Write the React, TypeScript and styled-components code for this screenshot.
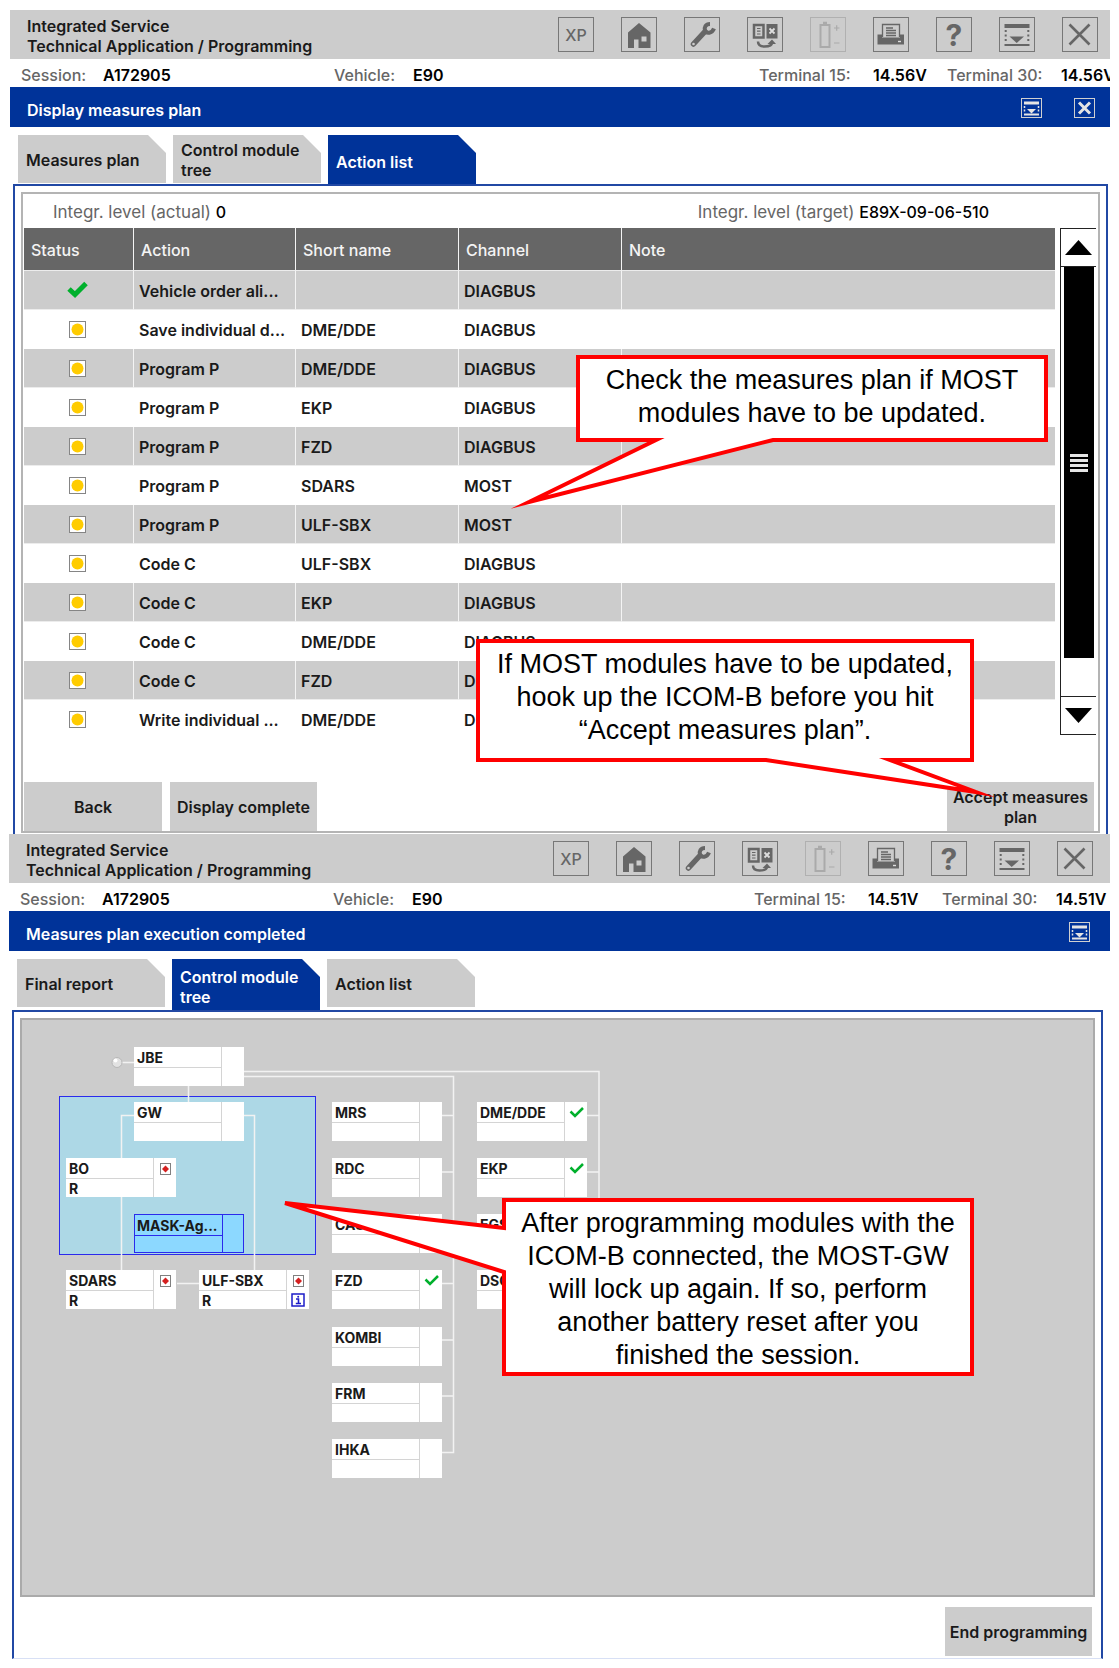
import React from "react";
import styled, { createGlobalStyle, css } from "styled-components";

const blue = "#003399";
const grey = "#cccccc";
const ink = "#666666";

const GlobalStyle = createGlobalStyle`
  *, *::before, *::after { box-sizing: border-box; }
  body {
    margin: 0;
    background: #fff;
    color: #1a1a1a;
    font: 600 16px/20px Inter, "Liberation Sans", sans-serif;
  }
  button { font: inherit; color: inherit; border: 0; padding: 0; cursor: pointer; }
`;

const Page = styled.main`
  padding: 10px 9px 0 9px;
`;

const Screen = styled.section<{ $indent?: number }>`
  position: relative;
  margin-left: ${(p) => p.$indent ?? 0}px;
`;

/* ---------- header ---------- */

const Header = styled.header<{ $end: number }>`
  display: flex;
  justify-content: space-between;
  align-items: center;
  height: 49px;
  padding: 0 ${(p) => p.$end}px 0 17px;
  background: ${grey};
`;

const AppName = styled.h1`
  margin: 0;
  padding-top: 2px;
  font: inherit;
`;

const Toolbar = styled.div`
  display: flex;
  gap: 27px;
`;

const ToolButton = styled.button<{ $off?: boolean }>`
  display: grid;
  place-items: center;
  width: 36px;
  height: 35px;
  background: transparent;
  color: ${(p) => (p.$off ? "#aaaaaa" : ink)};
  border: 1px solid ${(p) => (p.$off ? "#b0b0b0" : "#777777")};
  svg { display: block; width: 34px; height: 33px; }
`;

const XpLabel = styled.span`
  font-size: 16px;
  font-weight: 500;
`;

const HelpMark = styled.span`
  font-size: 30px;
  font-weight: 700;
`;

const InfoBar = styled.dl<{ $start: number }>`
  display: flex;
  align-items: center;
  height: 28px;
  margin: 0;
  padding: 3px 0 0 ${(p) => p.$start}px;
  overflow: hidden;
  white-space: nowrap;
`;

const Readout = styled.div<{ $label: number; $width: number; $push?: boolean }>`
  display: grid;
  grid-template-columns: ${(p) => p.$label}px 1fr;
  flex: 0 0 ${(p) => p.$width}px;
  min-width: 0;
  margin-left: ${(p) => (p.$push ? "auto" : "0")};
  dt { color: ${ink}; font-weight: 500; }
  dd { margin: 0; color: #000; }
`;

/* ---------- title bar ---------- */

const TitleBar = styled.div<{ $end: number }>`
  display: flex;
  align-items: center;
  justify-content: space-between;
  height: 40px;
  padding: 0 ${(p) => p.$end}px 0 17px;
  background: ${blue};
  color: #fff;
`;

const Title = styled.h2`
  margin: 0;
  padding-top: 6px;
  font: inherit;
`;

const TitleTools = styled.div`
  display: flex;
  gap: 32px;
  padding-top: 2px;
`;

const SmallButton = styled.button`
  width: 21px;
  height: 20px;
  background: transparent;
  color: #e4e4e4;
  border: 1px solid #d0d0d0;
  svg { display: block; width: 19px; height: 18px; }
`;

/* ---------- tabs ---------- */

const TabRow = styled.div`
  display: flex;
  align-items: flex-start;
  gap: 7px;
  padding: 8px 8px 0;
`;

const Tab = styled.button<{ $active?: boolean; $gap: number }>`
  width: 148px;
  height: ${(p) => (p.$active ? 48 + p.$gap : 48)}px;
  padding: ${(p) => (p.$active ? "5px" : "1px")} 16px 0 8px;
  text-align: left;
  background: ${(p) => (p.$active ? blue : grey)};
  color: ${(p) => (p.$active ? "#fff" : "#1a1a1a")};
  clip-path: polygon(0 0, calc(100% - 18px) 0, 100% 18px, 100% 100%, 0 100%);
`;

const Frame = styled.div<{ $right: number; $closed?: boolean }>`
  margin: 0 ${(p) => p.$right}px 0 3px;
  padding: 6px 6px ${(p) => (p.$closed ? 2 : 1)}px;
  border: solid #2148a4;
  border-width: 2px 2px 0;
  ${(p) => p.$closed && css`border-bottom: 1px solid #d8e0f5;`}
`;

const Sheet = styled.div`
  border: 2px solid #b4b4b4;
`;

/* ---------- action list ---------- */

const Levels = styled.div`
  display: flex;
  justify-content: space-between;
  align-items: center;
  height: 34px;
  padding: 2px 109px 0 30px;
  font-size: 17px;
  color: ${ink};
  font-weight: 400;
  b { color: #000; font-size: 16px; font-weight: 500; }
`;

const ListArea = styled.div`
  display: flex;
  align-items: flex-start;
  gap: 5px;
  min-height: 554px;
  padding: 0 2px 0 1px;
`;

const Table = styled.table`
  flex: 1;
  min-width: 0;
  border-collapse: separate;
  border-spacing: 0;
  table-layout: fixed;
  th, td {
    padding: 2px 2px 0 5px;
    text-align: left;
    white-space: nowrap;
    overflow: hidden;
    text-overflow: ellipsis;
    border-right: 1px solid #f4f4f4;
    border-bottom: 1px solid #ececec;
  }
  th:last-child, td:last-child { border-right: 0; }
  th {
    height: 43px;
    padding-left: 7px;
    background: ${ink};
    color: #f4f4f4;
    font-weight: 500;
  }
  td { height: 39px; }
  tbody tr:nth-child(odd) { background: ${grey}; }
  tbody tr:nth-child(even) td { border-color: #fff; }
  td:first-child { padding: 0 5px; text-overflow: clip; }
`;

const StatusBox = styled.div`
  display: grid;
  justify-content: center;
  padding-right: 2px;
  svg { display: block; }
`;

const ScrollBar = styled.div`
  display: flex;
  flex-direction: column;
  flex: 0 0 36px;
  height: 507px;
  border: 1px solid #222;
  border-right: 0;
`;

const ArrowButton = styled.button`
  display: grid;
  place-items: center;
  height: 37px;
  background: #fff;
`;

const Track = styled.div`
  flex: 1;
  padding: 0 2px 0 3px;
  border: solid #222;
  border-width: 1px 0;
`;

const Thumb = styled.div`
  display: flex;
  flex-direction: column;
  align-items: center;
  justify-content: center;
  gap: 2px;
  height: 391px;
  background: #000;
  i { width: 18px; height: 3px; background: #e6e6e6; }
`;

const ButtonBar = styled.div<{ $top?: number; $end: number }>`
  display: flex;
  gap: 8px;
  margin-top: ${(p) => p.$top ?? 0}px;
  padding: 0 ${(p) => p.$end}px 0 1px;
`;

const PlateButton = styled.button<{ $width: number; $push?: boolean }>`
  width: ${(p) => p.$width}px;
  height: 49px;
  margin-left: ${(p) => (p.$push ? "auto" : "0")};
  background: ${grey};
`;

/* ---------- module tree ---------- */

const Canvas = styled(Sheet)`
  position: relative;
  height: 579px;
  background: ${grey};
  border-color: #aaaaaa;
`;

const Wires = styled.svg`
  position: absolute;
  left: 0;
  top: 0;
  width: 620px;
  height: 480px;
`;

const MostZone = styled.div`
  position: absolute;
  left: 37px;
  top: 76px;
  width: 257px;
  height: 159px;
  background: #add8e6;
  border: 1px solid #2a2aec;
`;

const Node = styled.div<{ $x: number; $y: number; $masked?: boolean }>`
  position: absolute;
  left: ${(p) => p.$x}px;
  top: ${(p) => p.$y}px;
  display: grid;
  grid-template: 20px minmax(0, 1fr) / 87px 1fr;
  gap: 1px;
  width: 110px;
  height: 39px;
  font-size: 14px;
  font-weight: 700;
  color: #1a1a1a;
  background: #d4d4d4;
  > * { background: #fff; padding-left: 3px; line-height: 22px; white-space: nowrap; }
  ${(p) =>
    p.$masked &&
    css`
      background: #2a2aec;
      border: 1px solid #2a2aec;
      > * { background: #8cd8ff; padding-left: 2px; }
    `}
`;

const NodeVariant = styled.div`
  && { line-height: 19px; }
`;

const NodeFlags = styled.div`
  grid-column: 2;
  grid-row: 1 / 3;
  display: grid;
  grid-template-rows: 21px 17px;
  place-items: center;
  padding-right: 3px;
`;

/* ---------- callouts ---------- */

const Callout = styled.aside<{ $w: number; $h: number; $top: number; $left?: number; $right?: number }>`
  position: absolute;
  z-index: 2;
  top: ${(p) => p.$top}px;
  ${(p) => (p.$left !== undefined ? `left: ${p.$left}px;` : `right: ${p.$right}px;`)}
  width: ${(p) => p.$w}px;
  height: ${(p) => p.$h}px;
  pointer-events: none;
`;

const CalloutShape = styled.svg`
  position: absolute;
  inset: 0;
  width: 100%;
  height: 100%;
  overflow: visible;
  path { fill: #fff; stroke: #ff0000; stroke-width: 4; stroke-miterlimit: 10; }
`;

const CalloutText = styled.p`
  position: relative;
  margin: 0;
  padding-top: 9px;
  text-align: center;
  white-space: nowrap;
  color: #000;
  font: 400 27px/33px "Liberation Sans", Arial, sans-serif;
`;

/* ---------- icons ---------- */

const HomeIcon = () => (
  <svg viewBox="1 1 34 33" fill="currentColor">
    <path fillRule="evenodd" d="M18 6 29.5 15.500V31H17.500V22.500H13V31H7V15.500ZM20.500 19.500V24.500H25.500V19.500Z" />
  </svg>
);
const WrenchIcon = () => (
  <svg viewBox="1 1 34 33" fill="none" stroke="currentColor">
    <path d="M9.500 27 21 14.500" strokeWidth="5.500" strokeLinecap="round" />
    <path d="M26 7C21.500 7 20 10.500 21 13.500 22.500 17 28 16.500 30 11.500" strokeWidth="4" />
    <circle cx="9.500" cy="27" r="1.300" fill="#ccc" stroke="none" />
  </svg>
);
const SwapIcon = () => (
  <svg viewBox="1 1 34 33" fill="none" stroke="currentColor">
    <rect x="7" y="8" width="9.500" height="12.500" strokeWidth="2.500" />
    <path d="M10 11.500H13.500M10 14.200H13.500M10 17H13.500" strokeWidth="1.200" />
    <rect x="19.500" y="7" width="11" height="14.500" fill="currentColor" stroke="none" />
    <path d="M22.500 11.500 27.500 16.500M27.500 11.500 22.500 16.500" stroke="#ddd" strokeWidth="1.800" />
    <path d="M11 24.500C11 28.500 13.500 29.500 17.500 29.500 22.500 29.500 25 28.500 25 25.500" strokeWidth="2.500" />
    <path d="M25 22.500 29 27H20.500Z" fill="currentColor" stroke="none" />
  </svg>
);
const BatteryIcon = () => (
  <svg viewBox="1 1 34 33" fill="none" stroke="currentColor">
    <rect x="10.500" y="8" width="9" height="22" strokeWidth="2" />
    <path d="M13 6H17" strokeWidth="2.500" />
    <path d="M24 11H29.500M26.700 8.200V13.800M24 26H29.500" strokeWidth="1.200" />
  </svg>
);
const PrinterIcon = () => (
  <svg viewBox="1 1 34 33" fill="none" stroke="currentColor">
    <path d="M4.500 17.500H9V20.500H27V17.500H31V27.500H4.500Z" fill="currentColor" stroke="none" />
    <path d="M9.500 20V7.500H26.500V20" strokeWidth="1.300" />
    <path d="M13 11H20M13 13.500H23M13 16H23M13 18.500H23" strokeWidth="1.300" />
    <path d="M25 24.500H28" stroke="#ddd" strokeWidth="1.400" />
  </svg>
);
const DropPanelIcon = () => (
  <svg viewBox="1 1 34 33" fill="none" stroke="currentColor">
    <path d="M5.500 9H30.500" strokeWidth="4" />
    <path d="M6.700 13V25M29.300 13V25" strokeWidth="2" strokeDasharray="2 2.500" />
    <path d="M10.500 19.500H25L17.700 26Z" fill="currentColor" stroke="none" />
    <path d="M5.500 28H30.500" strokeWidth="2" />
  </svg>
);
const CrossIcon = () => (
  <svg viewBox="1 1 34 33" fill="none" stroke="currentColor" strokeWidth="2.600">
    <path d="M7.500 7.500 27.500 27.500M27.500 7.500 7.500 27.500" />
  </svg>
);
const SmallDropIcon = () => (
  <svg viewBox="0 0 19 18" fill="none" stroke="currentColor">
    <path d="M2 4H17" strokeWidth="3" />
    <path d="M2.500 7V14M16.500 7V14" strokeWidth="1.500" strokeDasharray="2 1.500" />
    <path d="M5 10H14L9.500 14.500Z" fill="currentColor" stroke="none" />
    <path d="M2 15.500H17" strokeWidth="2" />
  </svg>
);
const SmallCrossIcon = () => (
  <svg viewBox="0 0 19 18" fill="none" stroke="currentColor" strokeWidth="3">
    <path d="M4 3.500 15 14.500M15 3.500 4 14.500" />
  </svg>
);
const DoneIcon = () => (
  <svg width="21" height="18" viewBox="0 0 21 18" fill="none" stroke="#00b02c" strokeWidth="5">
    <path d="M2 8 8 13.500 19 2.500" />
  </svg>
);
const PendingIcon = () => (
  <svg width="17" height="17" viewBox="0 0 17 17">
    <rect x=".5" y=".5" width="16" height="16" fill="#fff" stroke="#858585" />
    <circle cx="8.500" cy="8.500" r="6" fill="#ffcc00" />
  </svg>
);
const NodeDoneIcon = () => (
  <svg width="15" height="11" viewBox="0 0 15 11" fill="none" stroke="#00b02c" strokeWidth="2.500">
    <path d="M1.500 4.500 6 9 14 1" />
  </svg>
);
const FaultIcon = () => (
  <svg width="11" height="12" viewBox="0 0 11 12">
    <rect x=".5" y=".5" width="10" height="11" fill="#fff" stroke="#808080" />
    <path d="M5.500 2.500 9 6 5.500 9.500 2 6Z" fill="#d42020" />
  </svg>
);
const InfoIcon = () => (
  <svg width="14" height="14" viewBox="0 0 14 14" fill="none" stroke="#1c1cc8">
    <rect x="1" y="1" width="12" height="12" fill="#fff" strokeWidth="1.500" />
    <path d="M5 6H7.500V10.500M4.800 10.500H10" strokeWidth="1.600" />
    <circle cx="7.200" cy="3.700" r="1" fill="#1c1cc8" stroke="none" />
  </svg>
);

/* ---------- data ---------- */

type Action = { done?: boolean; action: string; name: string; channel: string };

const actions: Action[] = [
  { done: true, action: "Vehicle order ali...", name: "", channel: "DIAGBUS" },
  { action: "Save individual d...", name: "DME/DDE", channel: "DIAGBUS" },
  { action: "Program P", name: "DME/DDE", channel: "DIAGBUS" },
  { action: "Program P", name: "EKP", channel: "DIAGBUS" },
  { action: "Program P", name: "FZD", channel: "DIAGBUS" },
  { action: "Program P", name: "SDARS", channel: "MOST" },
  { action: "Program P", name: "ULF-SBX", channel: "MOST" },
  { action: "Code C", name: "ULF-SBX", channel: "DIAGBUS" },
  { action: "Code C", name: "EKP", channel: "DIAGBUS" },
  { action: "Code C", name: "DME/DDE", channel: "DIAGBUS" },
  { action: "Code C", name: "FZD", channel: "DIAGBUS" },
  { action: "Write individual ...", name: "DME/DDE", channel: "DIAGBUS" },
];

type Module = {
  name: string;
  x: number;
  y: number;
  variant?: string;
  flags?: ("done" | "fault" | "info")[];
  masked?: boolean;
};

const modules: Module[] = [
  { name: "JBE", x: 112, y: 27 },
  { name: "GW", x: 112, y: 82 },
  { name: "BO", x: 44, y: 138, variant: "R", flags: ["fault"] },
  { name: "MASK-Ag...", x: 112, y: 194, masked: true },
  { name: "SDARS", x: 44, y: 250, variant: "R", flags: ["fault"] },
  { name: "ULF-SBX", x: 177, y: 250, variant: "R", flags: ["fault", "info"] },
  { name: "MRS", x: 310, y: 82 },
  { name: "RDC", x: 310, y: 138 },
  { name: "CAS", x: 310, y: 194 },
  { name: "FZD", x: 310, y: 250, flags: ["done"] },
  { name: "KOMBI", x: 310, y: 307 },
  { name: "FRM", x: 310, y: 363 },
  { name: "IHKA", x: 310, y: 419 },
  { name: "DME/DDE", x: 455, y: 82, flags: ["done"] },
  { name: "EKP", x: 455, y: 138, flags: ["done"] },
  { name: "EGS", x: 455, y: 194 },
  { name: "DSC", x: 455, y: 250 },
];

const flagIcons = { done: NodeDoneIcon, fault: FaultIcon, info: InfoIcon };

/* ---------- shared sections ---------- */

const AppHeader = ({ end }: { end: number }) => (
  <Header $end={end}>
    <AppName>
      Integrated Service
      <br />
      Technical Application / Programming
    </AppName>
    <Toolbar role="toolbar" aria-label="Application">
      <ToolButton aria-label="XP"><XpLabel>XP</XpLabel></ToolButton>
      <ToolButton aria-label="Home"><HomeIcon /></ToolButton>
      <ToolButton aria-label="Settings"><WrenchIcon /></ToolButton>
      <ToolButton aria-label="Switch session"><SwapIcon /></ToolButton>
      <ToolButton aria-label="Battery" $off disabled><BatteryIcon /></ToolButton>
      <ToolButton aria-label="Print"><PrinterIcon /></ToolButton>
      <ToolButton aria-label="Help"><HelpMark>?</HelpMark></ToolButton>
      <ToolButton aria-label="Minimise"><DropPanelIcon /></ToolButton>
      <ToolButton aria-label="Close"><CrossIcon /></ToolButton>
    </Toolbar>
  </Header>
);

const SessionInfo = ({ start, volts, last }: { start: number; volts: string; last: number }) => (
  <InfoBar $start={start}>
    <Readout $label={82} $width={313}><dt>Session:</dt><dd>A172905</dd></Readout>
    <Readout $label={79} $width={160}><dt>Vehicle:</dt><dd>E90</dd></Readout>
    <Readout $label={114} $width={188} $push><dt>Terminal 15:</dt><dd>{volts}</dd></Readout>
    <Readout $label={114} $width={last}><dt>Terminal 30:</dt><dd>{volts}</dd></Readout>
  </InfoBar>
);

const Tabs = ({ names, active, gap }: { names: string[]; active: number; gap: number }) => (
  <TabRow role="tablist">
    {names.map((name, i) => (
      <Tab key={name} role="tab" aria-selected={i === active} $active={i === active} $gap={gap}>
        {name}
      </Tab>
    ))}
  </TabRow>
);

const ModuleNode = ({ name, x, y, variant, flags = [], masked }: Module) => (
  <Node $x={x} $y={y} $masked={masked}>
    <div>{name}</div>
    <NodeVariant>{variant}</NodeVariant>
    <NodeFlags>
      {flags.map((flag) => {
        const Flag = flagIcons[flag];
        return <Flag key={flag} />;
      })}
    </NodeFlags>
  </Node>
);

/* ---------- screens ---------- */

const ActionListScreen = () => (
  <Screen $indent={1}>
    <AppHeader end={12} />
    <SessionInfo start={11} volts="14.56V" last={163} />
    <TitleBar $end={15}>
      <Title>Display measures plan</Title>
      <TitleTools>
        <SmallButton aria-label="Minimise"><SmallDropIcon /></SmallButton>
        <SmallButton aria-label="Close"><SmallCrossIcon /></SmallButton>
      </TitleTools>
    </TitleBar>
    <Tabs names={["Measures plan", "Control module tree", "Action list"]} active={2} gap={1} />
    <Frame $right={2}>
      <Sheet>
        <Levels>
          <span>Integr. level (actual) <b>0</b></span>
          <span>Integr. level (target) <b>E89X-09-06-510</b></span>
        </Levels>
        <ListArea>
          <Table>
            <colgroup>
              <col style={{ width: 110 }} />
              <col style={{ width: 162 }} />
              <col style={{ width: 163 }} />
              <col style={{ width: 163 }} />
              <col />
            </colgroup>
            <thead>
              <tr>
                <th>Status</th>
                <th>Action</th>
                <th>Short name</th>
                <th>Channel</th>
                <th>Note</th>
              </tr>
            </thead>
            <tbody>
              {actions.map((row, i) => (
                <tr key={i}>
                  <td><StatusBox>{row.done ? <DoneIcon /> : <PendingIcon />}</StatusBox></td>
                  <td>{row.action}</td>
                  <td>{row.name}</td>
                  <td>{row.channel}</td>
                  <td />
                </tr>
              ))}
            </tbody>
          </Table>
          <ScrollBar>
            <ArrowButton aria-label="Scroll up">
              <svg width="27" height="15" viewBox="0 0 27 15"><path d="M13.500 0 27 15H0Z" /></svg>
            </ArrowButton>
            <Track><Thumb><i /><i /><i /><i /></Thumb></Track>
            <ArrowButton aria-label="Scroll down">
              <svg width="27" height="15" viewBox="0 0 27 15"><path d="M13.500 15 27 0H0Z" /></svg>
            </ArrowButton>
          </ScrollBar>
        </ListArea>
        <ButtonBar $end={4}>
          <PlateButton $width={138}>Back</PlateButton>
          <PlateButton $width={147}>Display complete</PlateButton>
          <PlateButton $width={147} $push>Accept measures plan</PlateButton>
        </ButtonBar>
      </Sheet>
    </Frame>
    <Callout $w={472} $h={87} $top={345} $left={566}>
      <CalloutShape><path d="M2 2H470V85H197L-47 147 80 85H2Z" /></CalloutShape>
      <CalloutText>
        Check the measures plan if MOST
        <br />
        modules have to be updated.
      </CalloutText>
    </Callout>
    <Callout $w={498} $h={123} $top={629} $right={136}>
      <CalloutShape><path d="M2 2H496V121H414L500 153 290 121H2Z" /></CalloutShape>
      <CalloutText>
        If MOST modules have to be updated,
        <br />
        hook up the ICOM-B before you hit
        <br />
        “Accept measures plan”.
      </CalloutText>
    </Callout>
  </Screen>
);

const ModuleTreeScreen = () => (
  <Screen>
    <AppHeader end={17} />
    <SessionInfo start={11} volts="14.51V" last={168} />
    <TitleBar $end={20}>
      <Title>Measures plan execution completed</Title>
      <TitleTools>
        <SmallButton aria-label="Minimise"><SmallDropIcon /></SmallButton>
      </TitleTools>
    </TitleBar>
    <Tabs names={["Final report", "Control module tree", "Action list"]} active={1} gap={3} />
    <Frame $right={7} $closed>
      <Canvas>
        <MostZone />
        <Wires viewBox="0 0 620 480" fill="none" stroke="#f2f2f2" strokeWidth="1.500">
          <path d="M100 42.500H112M166.500 66V82M112 95.500H99.500V250M222 95.500H232.500V250M155 263.500H177" />
          <path d="M222 51.500H577V263.500H565M565 95.500H577M565 152H577M565 208H577" />
          <path d="M222 56.500H431.500V432.500H420M420 95.500H431.500M420 152H431.500M420 208H431.500M420 263.500H431.500M420 320H431.500M420 376H431.500" />
          <circle cx="95" cy="42.500" r="5" fill="#e2e2e2" stroke="#b8b8b8" strokeWidth="1" />
          <circle cx="93.500" cy="40.500" r="2" fill="#fff" stroke="none" />
        </Wires>
        {modules.map((m) => (
          <ModuleNode key={m.name} {...m} />
        ))}
      </Canvas>
      <ButtonBar $top={10} $end={3}>
        <PlateButton $width={147} $push>End programming</PlateButton>
      </ButtonBar>
    </Frame>
    <Callout $w={472} $h={178} $top={364} $left={493}>
      <CalloutShape><path d="M2 2H470V176H2V74L-217 5 2 30Z" /></CalloutShape>
      <CalloutText>
        After programming modules with the
        <br />
        ICOM-B connected, the MOST-GW
        <br />
        will lock up again. If so, perform
        <br />
        another battery reset after you
        <br />
        finished the session.
      </CalloutText>
    </Callout>
  </Screen>
);

export default function App() {
  return (
    <Page>
      <GlobalStyle />
      <ActionListScreen />
      <ModuleTreeScreen />
    </Page>
  );
}
